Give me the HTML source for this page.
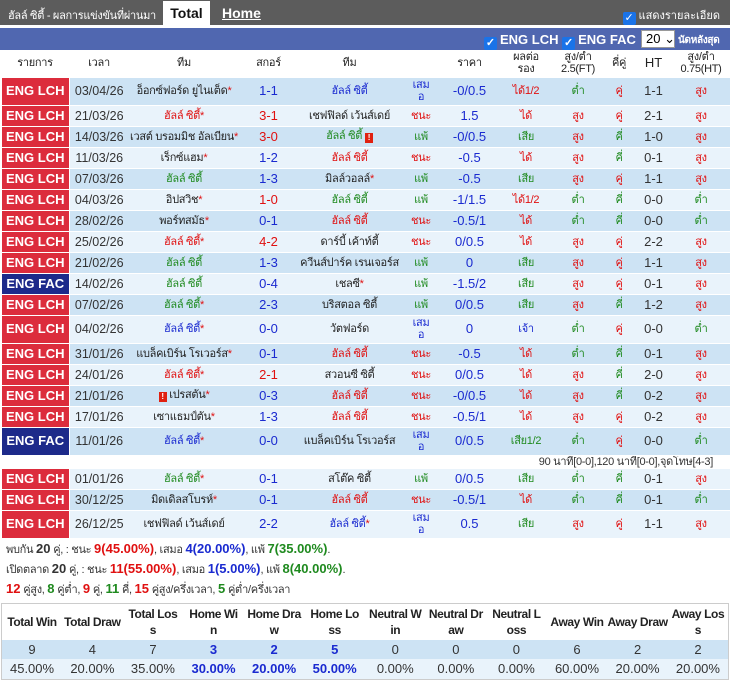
<!DOCTYPE html>
<html><head><meta charset="utf-8">
<style>
*{margin:0;padding:0;box-sizing:border-box}
body{width:730px;height:684px;background:#fff;font-family:"Liberation Sans",sans-serif;font-size:13px;color:#333;overflow:hidden}
.top{height:25px;background:#5c5c5c;position:relative;color:#fff}
.top .t1{position:absolute;left:8px;top:6px;font-size:11px;letter-spacing:-0.3px;white-space:nowrap}
.top .tab{position:absolute;left:163px;top:1px;width:47px;height:24px;background:#fff;color:#111;font-weight:bold;font-size:14px;text-align:center;line-height:24px}
.top .home{position:absolute;left:222px;top:5px;font-weight:bold;font-size:14px;text-decoration:underline}
.top .chk{position:absolute;right:10px;top:6px;font-size:11px;white-space:nowrap}
.cb{display:inline-block;width:13px;height:13px;background:#1a73e8;border-radius:2px;color:#fff;font-size:11px;line-height:13px;text-align:center;vertical-align:-2px;margin-right:3px}
.blue{height:22px;background:#5067b0;margin-top:3px;color:#fff;font-weight:bold;position:relative;font-size:13px;white-space:nowrap}
.blue .f{position:absolute;left:484px;top:4px}
.sel{position:absolute;left:641px;top:2px;width:34px;height:18px;background:#fff;color:#000;font-weight:normal;font-size:13px;padding-left:4px;line-height:16px;border:1px solid #999}
.blue .r{position:absolute;left:678px;top:5px;font-size:10px;letter-spacing:-0.3px}
table{border-collapse:collapse;table-layout:fixed;width:730px}
.m td{text-align:center;font-size:11px;height:21px;padding:0;line-height:12px;border-bottom:1px solid #fff;white-space:nowrap;overflow:hidden;letter-spacing:-0.3px}
.m tr.hd td{height:27px;background:#fff;color:#222}
.m tr.a td{background:#cde3f4}
.m tr.b td{background:#e9f3fb}
.m tr.tl td{height:28px}
.m td.lg{background:#dc2c3c!important;color:#fff;font-weight:bold;font-size:13px;border:1px solid #fff;border-left:2px solid #fff;letter-spacing:0}
.m td.fa{background:#1d2a8a!important}
.m tr.n td{background:#fff;height:13px;text-align:right;padding-right:18px}
.m td.dt{font-size:12.5px;letter-spacing:0;color:#333}
.R{color:#e01010}.G{color:#1f8a1f}.B{color:#1a2ad0}.D{color:#222}
.s{color:#e01010}
.sc{font-size:13px!important;letter-spacing:0!important}
.rc{display:inline-block;width:8px;height:10px;background:#e02010;color:#fff;font-size:8px;line-height:10px;font-weight:bold;vertical-align:-1px}
.sum{font-size:11px;padding-left:6px;height:20px;line-height:20px;white-space:nowrap;letter-spacing:-0.3px;overflow:hidden}
.sum b{font-size:13px;letter-spacing:0;line-height:14px}
.st{margin-top:3px;border:1px solid #ccc;width:728px;margin-left:1px}
.st td{text-align:center;font-size:13px;padding:0;white-space:nowrap;overflow:hidden}
.st tr.h td{height:37px;font-weight:bold;line-height:16px;color:#222;background:#fff;font-size:12px;letter-spacing:-0.4px}
.st tr.x td{height:19px;background:#cde3f4}
.st tr.y td{height:20px;background:#e9f3fb}
</style></head><body>
<div class="top"><span class="t1">ฮัลล์ ซิตี้ - ผลการแข่งขันที่ผ่านมา</span><span class="tab">Total</span><span class="home">Home</span><span class="chk"><span class="cb">✓</span>แสดงรายละเอียด</span></div>
<div class="blue"><span class="f"><span class="cb">✓</span>ENG LCH <span class="cb">✓</span>ENG FAC</span><span class="sel">20 ⌄</span><span class="r">นัดหลังสุด</span></div>
<table class="m">
<colgroup><col style="width:68px"><col style="width:60px"><col style="width:110px"><col style="width:59px"><col style="width:103px"><col style="width:40px"><col style="width:57px"><col style="width:56px"><col style="width:48px"><col style="width:34px"><col style="width:35px"><col style="width:60px"></colgroup>
<tr class="hd"><td>รายการ</td><td>เวลา</td><td>ทีม</td><td>สกอร์</td><td>ทีม</td><td></td><td>ราคา</td><td>ผลต่อ<br>รอง</td><td>สูง/ต่ำ<br>2.5(FT)</td><td>คี่คู่</td><td class="sc">HT</td><td>สูง/ต่ำ<br>0.75(HT)</td></tr>
<tr class="a tl"><td class="lg">ENG LCH</td><td class="dt">03/04/26</td><td class="D">อ็อกซ์ฟอร์ด ยูไนเต็ด<span class="s">*</span></td><td class="sc B">1-1</td><td class="B">ฮัลล์ ซิตี้</td><td class="B">เสม<br>อ</td><td class="B sc">-0/0.5</td><td class="R">ได้1/2</td><td class="G">ต่ำ</td><td class="R">คู่</td><td class="sc">1-1</td><td class="R">สูง</td></tr>
<tr class="b"><td class="lg">ENG LCH</td><td class="dt">21/03/26</td><td class="R">ฮัลล์ ซิตี้<span class="s">*</span></td><td class="sc R">3-1</td><td class="D">เชฟฟิลด์ เว้นส์เดย์</td><td class="R">ชนะ</td><td class="B sc">1.5</td><td class="R">ได้</td><td class="R">สูง</td><td class="R">คู่</td><td class="sc">2-1</td><td class="R">สูง</td></tr>
<tr class="a"><td class="lg">ENG LCH</td><td class="dt">14/03/26</td><td class="D">เวสต์ บรอมมิช อัลเบียน<span class="s">*</span></td><td class="sc R">3-0</td><td class="G">ฮัลล์ ซิตี้ <span class="rc">!</span></td><td class="G">แพ้</td><td class="B sc">-0/0.5</td><td class="G">เสีย</td><td class="R">สูง</td><td class="G">คี่</td><td class="sc">1-0</td><td class="R">สูง</td></tr>
<tr class="b"><td class="lg">ENG LCH</td><td class="dt">11/03/26</td><td class="D">เร็กซ์แฮม<span class="s">*</span></td><td class="sc B">1-2</td><td class="R">ฮัลล์ ซิตี้</td><td class="R">ชนะ</td><td class="B sc">-0.5</td><td class="R">ได้</td><td class="R">สูง</td><td class="G">คี่</td><td class="sc">0-1</td><td class="R">สูง</td></tr>
<tr class="a"><td class="lg">ENG LCH</td><td class="dt">07/03/26</td><td class="G">ฮัลล์ ซิตี้</td><td class="sc B">1-3</td><td class="D">มิลล์วอลล์<span class="s">*</span></td><td class="G">แพ้</td><td class="B sc">-0.5</td><td class="G">เสีย</td><td class="R">สูง</td><td class="R">คู่</td><td class="sc">1-1</td><td class="R">สูง</td></tr>
<tr class="b"><td class="lg">ENG LCH</td><td class="dt">04/03/26</td><td class="D">อิปสวิช<span class="s">*</span></td><td class="sc R">1-0</td><td class="G">ฮัลล์ ซิตี้</td><td class="G">แพ้</td><td class="B sc">-1/1.5</td><td class="R">ได้1/2</td><td class="G">ต่ำ</td><td class="G">คี่</td><td class="sc">0-0</td><td class="G">ต่ำ</td></tr>
<tr class="a"><td class="lg">ENG LCH</td><td class="dt">28/02/26</td><td class="D">พอร์ทสมัธ<span class="s">*</span></td><td class="sc B">0-1</td><td class="R">ฮัลล์ ซิตี้</td><td class="R">ชนะ</td><td class="B sc">-0.5/1</td><td class="R">ได้</td><td class="G">ต่ำ</td><td class="G">คี่</td><td class="sc">0-0</td><td class="G">ต่ำ</td></tr>
<tr class="b"><td class="lg">ENG LCH</td><td class="dt">25/02/26</td><td class="R">ฮัลล์ ซิตี้<span class="s">*</span></td><td class="sc R">4-2</td><td class="D">ดาร์บี้ เค้าท์ตี้</td><td class="R">ชนะ</td><td class="B sc">0/0.5</td><td class="R">ได้</td><td class="R">สูง</td><td class="R">คู่</td><td class="sc">2-2</td><td class="R">สูง</td></tr>
<tr class="a"><td class="lg">ENG LCH</td><td class="dt">21/02/26</td><td class="G">ฮัลล์ ซิตี้</td><td class="sc B">1-3</td><td class="D">ควีนส์ปาร์ค เรนเจอร์ส</td><td class="G">แพ้</td><td class="B sc">0</td><td class="G">เสีย</td><td class="R">สูง</td><td class="R">คู่</td><td class="sc">1-1</td><td class="R">สูง</td></tr>
<tr class="b"><td class="lg fa">ENG FAC</td><td class="dt">14/02/26</td><td class="G">ฮัลล์ ซิตี้</td><td class="sc B">0-4</td><td class="D">เชลซี<span class="s">*</span></td><td class="G">แพ้</td><td class="B sc">-1.5/2</td><td class="G">เสีย</td><td class="R">สูง</td><td class="R">คู่</td><td class="sc">0-1</td><td class="R">สูง</td></tr>
<tr class="a"><td class="lg">ENG LCH</td><td class="dt">07/02/26</td><td class="G">ฮัลล์ ซิตี้<span class="s">*</span></td><td class="sc B">2-3</td><td class="D">บริสตอล ซิตี้</td><td class="G">แพ้</td><td class="B sc">0/0.5</td><td class="G">เสีย</td><td class="R">สูง</td><td class="G">คี่</td><td class="sc">1-2</td><td class="R">สูง</td></tr>
<tr class="b tl"><td class="lg">ENG LCH</td><td class="dt">04/02/26</td><td class="B">ฮัลล์ ซิตี้<span class="s">*</span></td><td class="sc B">0-0</td><td class="D">วัตฟอร์ด</td><td class="B">เสม<br>อ</td><td class="B sc">0</td><td class="B">เจ้า</td><td class="G">ต่ำ</td><td class="R">คู่</td><td class="sc">0-0</td><td class="G">ต่ำ</td></tr>
<tr class="a"><td class="lg">ENG LCH</td><td class="dt">31/01/26</td><td class="D">แบล็คเบิร์น โรเวอร์ส<span class="s">*</span></td><td class="sc B">0-1</td><td class="R">ฮัลล์ ซิตี้</td><td class="R">ชนะ</td><td class="B sc">-0.5</td><td class="R">ได้</td><td class="G">ต่ำ</td><td class="G">คี่</td><td class="sc">0-1</td><td class="R">สูง</td></tr>
<tr class="b"><td class="lg">ENG LCH</td><td class="dt">24/01/26</td><td class="R">ฮัลล์ ซิตี้<span class="s">*</span></td><td class="sc R">2-1</td><td class="D">สวอนซี ซิตี้</td><td class="R">ชนะ</td><td class="B sc">0/0.5</td><td class="R">ได้</td><td class="R">สูง</td><td class="G">คี่</td><td class="sc">2-0</td><td class="R">สูง</td></tr>
<tr class="a"><td class="lg">ENG LCH</td><td class="dt">21/01/26</td><td class="D"><span class="rc">!</span> เปรสตัน<span class="s">*</span></td><td class="sc B">0-3</td><td class="R">ฮัลล์ ซิตี้</td><td class="R">ชนะ</td><td class="B sc">-0/0.5</td><td class="R">ได้</td><td class="R">สูง</td><td class="G">คี่</td><td class="sc">0-2</td><td class="R">สูง</td></tr>
<tr class="b"><td class="lg">ENG LCH</td><td class="dt">17/01/26</td><td class="D">เซาแธมป์ตัน<span class="s">*</span></td><td class="sc B">1-3</td><td class="R">ฮัลล์ ซิตี้</td><td class="R">ชนะ</td><td class="B sc">-0.5/1</td><td class="R">ได้</td><td class="R">สูง</td><td class="R">คู่</td><td class="sc">0-2</td><td class="R">สูง</td></tr>
<tr class="a tl"><td class="lg fa">ENG FAC</td><td class="dt">11/01/26</td><td class="B">ฮัลล์ ซิตี้<span class="s">*</span></td><td class="sc B">0-0</td><td class="D">แบล็คเบิร์น โรเวอร์ส</td><td class="B">เสม<br>อ</td><td class="B sc">0/0.5</td><td class="G">เสีย1/2</td><td class="G">ต่ำ</td><td class="R">คู่</td><td class="sc">0-0</td><td class="G">ต่ำ</td></tr>
<tr class="n"><td colspan="12">90 นาที[0-0],120 นาที[0-0],จุดโทษ[4-3]</td></tr>
<tr class="b"><td class="lg">ENG LCH</td><td class="dt">01/01/26</td><td class="G">ฮัลล์ ซิตี้<span class="s">*</span></td><td class="sc B">0-1</td><td class="D">สโต๊ค ซิตี้</td><td class="G">แพ้</td><td class="B sc">0/0.5</td><td class="G">เสีย</td><td class="G">ต่ำ</td><td class="G">คี่</td><td class="sc">0-1</td><td class="R">สูง</td></tr>
<tr class="a"><td class="lg">ENG LCH</td><td class="dt">30/12/25</td><td class="D">มิดเดิลสโบรห์<span class="s">*</span></td><td class="sc B">0-1</td><td class="R">ฮัลล์ ซิตี้</td><td class="R">ชนะ</td><td class="B sc">-0.5/1</td><td class="R">ได้</td><td class="G">ต่ำ</td><td class="G">คี่</td><td class="sc">0-1</td><td class="G">ต่ำ</td></tr>
<tr class="b tl"><td class="lg">ENG LCH</td><td class="dt">26/12/25</td><td class="D">เชฟฟิลด์ เว้นส์เดย์</td><td class="sc B">2-2</td><td class="B">ฮัลล์ ซิตี้<span class="s">*</span></td><td class="B">เสม<br>อ</td><td class="B sc">0.5</td><td class="G">เสีย</td><td class="R">สูง</td><td class="R">คู่</td><td class="sc">1-1</td><td class="R">สูง</td></tr>
</table>
<div class="sum" style="margin-top:1px">พบกัน <b>20</b> คู่, : ชนะ <b class="R">9(45.00%)</b>, เสมอ <b class="B">4(20.00%)</b>, แพ้ <b class="G">7(35.00%)</b>.</div>
<div class="sum">เปิดตลาด <b>20</b> คู่, : ชนะ <b class="R">11(55.00%)</b>, เสมอ <b class="B">1(5.00%)</b>, แพ้ <b class="G">8(40.00%)</b>.</div>
<div class="sum"><b class="R">12</b> คู่สูง, <b class="G">8</b> คู่ต่ำ, <b class="R">9</b> คู่, <b class="G">11</b> คี่, <b class="R">15</b> คู่สูง/ครึ่งเวลา, <b class="G">5</b> คู่ต่ำ/ครึ่งเวลา</div>
<table class="st">
<tr class="h"><td>Total Win</td><td>Total Draw</td><td>Total Los<br>s</td><td>Home Wi<br>n</td><td>Home Dra<br>w</td><td>Home Lo<br>ss</td><td>Neutral W<br>in</td><td>Neutral Dr<br>aw</td><td>Neutral L<br>oss</td><td>Away Win</td><td>Away Draw</td><td>Away Los<br>s</td></tr>
<tr class="x"><td>9</td><td>4</td><td>7</td><td class="B"><b>3</b></td><td class="B"><b>2</b></td><td class="B"><b>5</b></td><td>0</td><td>0</td><td>0</td><td>6</td><td>2</td><td>2</td></tr>
<tr class="y"><td>45.00%</td><td>20.00%</td><td>35.00%</td><td class="B"><b>30.00%</b></td><td class="B"><b>20.00%</b></td><td class="B"><b>50.00%</b></td><td>0.00%</td><td>0.00%</td><td>0.00%</td><td>60.00%</td><td>20.00%</td><td>20.00%</td></tr>
</table>
</body></html>
